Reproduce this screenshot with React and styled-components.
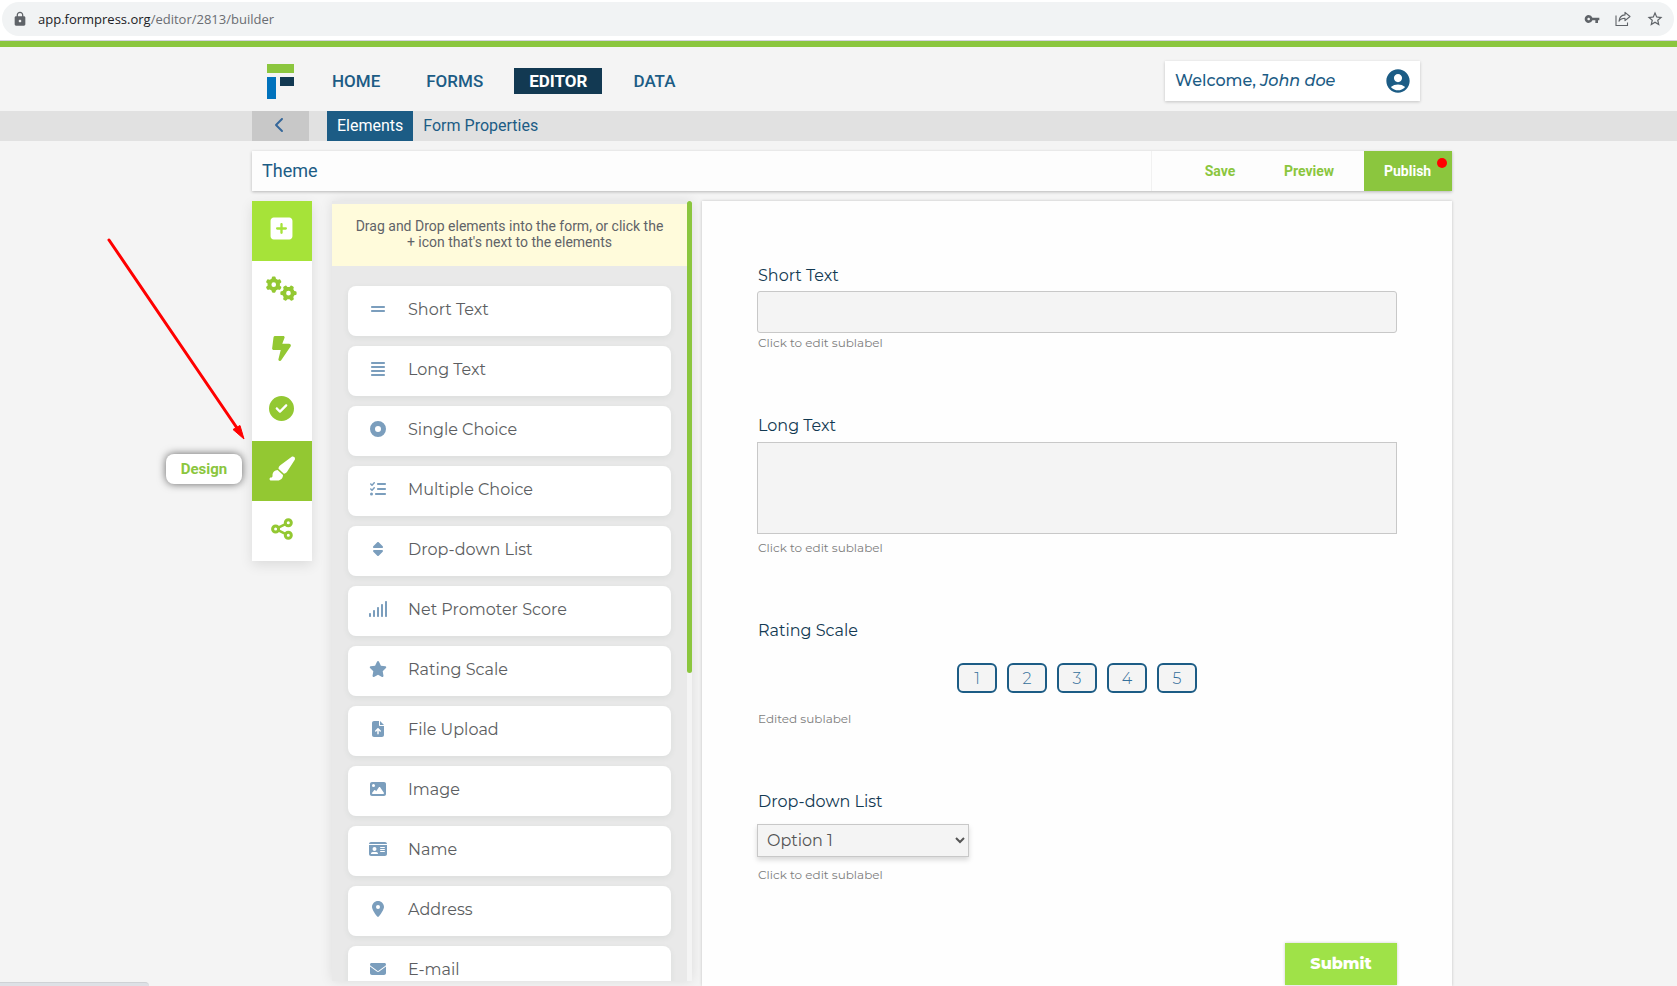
import React from "react";
import styled, { createGlobalStyle, css } from "styled-components";
import {
  FaGripLines, FaAlignJustify, FaCircleDot, FaListCheck, FaSort, FaStar,
  FaFileArrowUp, FaImage, FaIdCard, FaLocationDot, FaEnvelope, FaSquarePlus, FaGears,
  FaBoltLightning, FaCircleCheck, FaPaintbrush, FaChevronLeft,
} from "react-icons/fa6";
import { MdAccountCircle, MdVpnKey, MdStarBorder, MdLock } from "react-icons/md";

const roboto = `Roboto, "Liberation Sans", sans-serif`;
const rounded = `Montserrat, Inter, "Liberation Sans", sans-serif`;
const blue = "#1c5c85";
const navy = "#123952";
const green = "#8bc63e";
const leaf = "#93c832";
const lime = "#a6e339";

const GlobalStyle = createGlobalStyle`
  *, *::before, *::after { box-sizing: border-box; }
  body { margin: 0; background: #f4f4f4; font-family: ${roboto}; overflow-x: hidden; }
  button, input, textarea, select { font: inherit; margin: 0; }
  a { text-decoration: none; color: inherit; }
`;

const Page = styled.div`
  position: relative;
  min-height: 100vh;
  display: flex;
  flex-direction: column;
`;

/* Browser address bar */
const AddressBar = styled.div`
  background: #fff;
  padding: 2px 3px 4px 2px;
  border-bottom: 1px solid #d5d3dd;
`;
const AddressPill = styled.div`
  height: 34px;
  border-radius: 17px;
  background: #f1f3f4;
  display: flex;
  align-items: center;
  gap: 15px;
  padding: 0 10px;
  color: #5f6368;
  font: 13px/20px "Open Sans", sans-serif;
`;
const Url = styled.span`
  flex: 1;
  margin-left: -5px;
  color: #6a6d72;
  b { font-weight: 400; color: #202124; }
`;

const Shell = styled.div`
  padding-left: 27px;
`;
const Container = styled.div`
  width: 100%;
  max-width: 1200px;
  margin: 0 auto;
  display: flex;
`;

/* Main header */
const Header = styled.header`
  border-top: 6px solid ${green};
  height: 70px;
`;
const HeaderRow = styled(Container)`
  height: 64px;
  align-items: center;
  padding: 4px 32px 0 15px;
`;
const Logo = styled.svg`
  display: block;
  margin-right: 23px;
`;
const MainNav = styled.nav`
  display: flex;
  align-items: center;
  gap: 16px;
  flex: 1;
`;
const NavLink = styled.a`
  padding: 0 15px;
  line-height: 26px;
  font-size: 17px;
  font-weight: 500;
  color: ${blue};
  ${(p) => p.$active && css`
    background: ${navy};
    color: #fff;
    font-weight: 700;
  `}
`;
const UserBox = styled.div`
  width: 255px;
  height: 40px;
  padding: 0 8px 0 10px;
  background: #fff;
  box-shadow: 0 1px 3px rgba(0, 0, 0, 0.2);
  display: flex;
  align-items: center;
  justify-content: space-between;
  font: 500 16px/20px ${rounded};
  color: ${blue};
`;

/* Secondary bar */
const SubBar = styled.div`
  background: #e1e1e1;
`;
const SubRow = styled(Container)`
  height: 30px;
`;
const Back = styled.button`
  width: 57px;
  margin-right: 18px;
  padding: 0 2px 2px 0;
  border: 0;
  background: #c8c8c8;
  color: #35679a;
  display: flex;
  align-items: center;
  justify-content: center;
`;
const Tab = styled.a`
  padding: 0 10px;
  font-size: 16px;
  line-height: 29px;
  color: ${blue};
  ${(p) => p.$active && css`
    background: ${blue};
    color: #fff;
  `}
`;

/* Title and actions */
const Toolbar = styled(Container)`
  margin-top: 10px;
  height: 40px;
  background: #fdfdfd;
  box-shadow: 0 1px 3px rgba(0, 0, 0, 0.25);
`;
const Title = styled.h1`
  flex: 1;
  margin: 0;
  padding-left: 10px;
  font-size: 18px;
  font-weight: 400;
  line-height: 39px;
  color: ${blue};
`;
const Actions = styled.div`
  display: flex;
  justify-content: flex-end;
  width: 301px;
  border-left: 1px solid #f1f1f1;
`;
const Action = styled.button`
  position: relative;
  border: 0;
  padding: 0 20px 1px;
  background: none;
  color: ${green};
  font-size: 14px;
  font-weight: 700;
  width: 88px;
  ${(p) => p.$primary && css`
    margin-left: 12px;
    background: ${green};
    color: #fff;
    text-align: left;
  `}
`;
const Dot = styled.span`
  position: absolute;
  top: 7px;
  right: 5px;
  width: 10px;
  height: 10px;
  border-radius: 50%;
  background: #f00;
`;

/* Workspace */
const Workspace = styled(Container)`
  margin-top: 10px;
  align-items: flex-start;
`;
const Rail = styled.div`
  width: 60px;
  margin-right: 20px;
  background: #fff;
  box-shadow: 0 4px 12px rgba(0, 0, 0, 0.1);
`;
const RailButton = styled.button`
  position: relative;
  display: flex;
  align-items: center;
  justify-content: center;
  width: 60px;
  height: 60px;
  padding: 0 1px 5px 0;
  border: 0;
  background: ${(p) => p.$bg || "#fff"};
  color: ${(p) => (p.$bg ? "#fff" : leaf)};
`;
const Tooltip = styled.span`
  position: absolute;
  right: 70px;
  top: 13px;
  width: 76px;
  border-radius: 8px;
  background: #fff;
  box-shadow: 0 0 8px rgba(0, 0, 0, 0.6);
  color: ${green};
  font-size: 15px;
  font-weight: 700;
  line-height: 30px;
  text-align: center;
`;

const ElementsPanel = styled.aside`
  width: 360px;
  height: calc(100vh - 206px);
  min-height: 400px;
  display: flex;
  background: #e9e9e9;
  box-shadow: 0 0 12px rgba(0, 0, 0, 0.1);
`;
const ElementsScroll = styled.div`
  flex: 1;
  padding-top: 3px;
  overflow: hidden;
`;
const Track = styled.div`
  width: 5px;
  background: #f4f4f4;
`;
const Thumb = styled.div`
  height: ${(p) => p.$size}%;
  border-radius: 3px;
  background: ${green};
`;
const Hint = styled.p`
  margin: 0;
  padding: 14px 20px 16px;
  background: #fffbdb;
  color: #5f6368;
  font-size: 14px;
  line-height: 16px;
  text-align: center;
`;
const ElementList = styled.ul`
  list-style: none;
  margin: 0;
  padding: 20px 16px;
  display: flex;
  flex-direction: column;
  gap: 10px;
`;
const ElementCard = styled.li`
  flex: none;
  height: 50px;
  padding-bottom: 4px;
  display: flex;
  align-items: center;
  border-radius: 8px;
  background: #fff;
  box-shadow: 0 2px 6px rgba(40, 70, 60, 0.07);
  font: 16px/20px ${rounded};
  color: #5c5e61;
`;
const CardIcon = styled.span`
  width: 60px;
  display: flex;
  justify-content: center;
  color: #7b9ebd;
`;
const CardName = styled.span`
  padding-top: 2px;
`;

/* Form canvas */
const Canvas = styled.form`
  flex: 1;
  align-self: stretch;
  min-width: 0;
  margin-left: 10px;
  padding: 64px 55px 1px;
  background: #fefefe;
  box-shadow: 0 0 3px rgba(0, 0, 0, 0.2);
  display: flex;
  flex-direction: column;
  font-family: ${rounded};
`;
const Field = styled.div`
  display: flex;
  flex-direction: column;
  align-items: flex-start;
  margin-bottom: ${(p) => p.$after || 64}px;
`;
const Label = styled.label`
  padding-left: 1px;
  font-size: 16px;
  line-height: 22px;
  margin-bottom: ${(p) => p.$gap || 4}px;
  color: ${navy};
`;
const SubLabel = styled.span`
  padding-left: 1px;
  font-size: 12px;
  line-height: 16px;
  margin-top: ${(p) => p.$gap || 2}px;
  color: #7d7d7d;
`;
const control = css`
  border: 1px solid #c8c8c8;
  background: #f4f4f4;
  color: #555;
`;
const TextInput = styled.input`
  ${control}
  width: 100%;
  height: 42px;
  border-radius: 3px;
  padding: 0 10px;
`;
const TextArea = styled.textarea`
  ${control}
  display: block;
  width: 100%;
  height: 92px;
  padding: 10px;
  resize: none;
`;
const Select = styled.select`
  ${control}
  width: 212px;
  height: 33px;
  padding: 0 5px;
  font-size: 16px;
  box-shadow: 0 3px 5px rgba(0, 0, 0, 0.15);
`;
const Ratings = styled.div`
  align-self: center;
  display: flex;
  gap: 10px;
`;
const Rating = styled.button`
  width: 40px;
  height: 30px;
  padding: 0;
  border: 2px solid ${blue};
  border-radius: 6px;
  background: #f4f4f4;
  color: #35709b;
  font-size: 16px;
  font-weight: 300;
`;
const Submit = styled.button`
  align-self: flex-end;
  width: 112px;
  height: 42px;
  padding: 0 0 2px;
  border: 0;
  background: #9fe248;
  color: #fff;
  font-size: 16px;
  font-weight: 800;
  box-shadow: 0 0 3px rgba(0, 0, 0, 0.2);
`;

/* Overlays */
const Arrow = styled.svg`
  position: absolute;
  top: 236px;
  left: calc((100% - 27px - 1200px) / 2 - 120px);
  pointer-events: none;
`;
const StatusBubble = styled.div`
  position: fixed;
  left: 0;
  bottom: 0;
  width: 149px;
  height: 4px;
  background: #dee1e6;
  border-top: 1px solid #cfd2d6;
  border-top-right-radius: 4px;
`;

function ShareNodes() {
  return (
    <svg width="22" height="22" viewBox="0 0 22 22" fill="none" stroke="currentColor" strokeWidth="3" aria-hidden="true">
      <circle cx="4.6" cy="11" r="3" />
      <circle cx="17.3" cy="4.7" r="3" />
      <circle cx="17.3" cy="17.3" r="3" />
      <path d="M7.4 9.600l7-3.500M7.400 12.400l7 3.500" strokeWidth="2.4" />
    </svg>
  );
}

function ShareArrow() {
  return (
    <svg width="16" height="16" viewBox="0 0 16 16" fill="none" stroke="currentColor" strokeWidth="1.1" aria-hidden="true">
      <path d="M1 4.500v10h11.500v-3" />
      <path d="M10 1.300l5 4.200-5 4.200V7.200c-3 0-4.800 1-6 3 .3-3.600 2.400-6 6-6.300z" strokeLinejoin="round" />
    </svg>
  );
}

function SignalBars() {
  return (
    <svg width="18" height="16" viewBox="0 0 18 16" fill="currentColor" aria-hidden="true">
      {[4, 7, 10, 13, 16].map((h, i) => (
        <rect key={h} x={i * 4} y={16 - h} width="2" height={h} rx="0.7" />
      ))}
    </svg>
  );
}

const railItems = [
  { name: "Add element", icon: <FaSquarePlus size={25} />, bg: lime },
  { name: "Settings", icon: <FaGears size={31} /> },
  { name: "Integrations", icon: <FaBoltLightning size={25} /> },
  { name: "After submission", icon: <FaCircleCheck size={25} /> },
  { name: "Design", icon: <FaPaintbrush size={27} />, bg: leaf, tip: true },
  { name: "Share", icon: <ShareNodes /> },
];

const elements = [
  ["Short Text", <FaGripLines size={16} />],
  ["Long Text", <FaAlignJustify size={16} />],
  ["Single Choice", <FaCircleDot size={16} />],
  ["Multiple Choice", <FaListCheck size={16} />],
  ["Drop-down List", <FaSort size={16} />],
  ["Net Promoter Score", <SignalBars />],
  ["Rating Scale", <FaStar size={18} />],
  ["File Upload", <FaFileArrowUp size={16} />],
  ["Image", <FaImage size={16} />],
  ["Name", <FaIdCard size={18} />],
  ["Address", <FaLocationDot size={16} />],
  ["E-mail", <FaEnvelope size={16} />],
];

export default function App() {
  return (
    <Page>
      <GlobalStyle />
      <AddressBar>
        <AddressPill>
          <MdLock size={16} />
          <Url><b>app.formpress.org</b>/editor/2813/builder</Url>
          <MdVpnKey size={16} />
          <ShareArrow />
          <MdStarBorder size={18} />
        </AddressPill>
      </AddressBar>

      <Header>
        <Shell>
          <HeaderRow>
            <Logo width="27" height="35" viewBox="0 0 27 35" role="img" aria-label="FormPress">
              <rect width="27" height="9" fill={green} />
              <rect y="13" width="9" height="22" fill="#0072bc" />
              <rect x="13" y="13" width="14" height="9" fill={navy} />
            </Logo>
            <MainNav>
              <NavLink href="#home">HOME</NavLink>
              <NavLink href="#forms">FORMS</NavLink>
              <NavLink href="#editor" $active>EDITOR</NavLink>
              <NavLink href="#data">DATA</NavLink>
            </MainNav>
            <UserBox>
              <span>Welcome, <em>John doe</em></span>
              <MdAccountCircle size={28} />
            </UserBox>
          </HeaderRow>
        </Shell>
      </Header>

      <SubBar>
        <Shell>
          <SubRow>
            <Back aria-label="Back"><FaChevronLeft size={16} /></Back>
            <Tab href="#elements" $active>Elements</Tab>
            <Tab href="#properties">Form Properties</Tab>
          </SubRow>
        </Shell>
      </SubBar>

      <Shell>
        <Toolbar>
          <Title>Theme</Title>
          <Actions>
            <Action>Save</Action>
            <Action>Preview</Action>
            <Action $primary>Publish<Dot /></Action>
          </Actions>
        </Toolbar>

        <Workspace>
          <Rail>
            {railItems.map((item) => (
              <RailButton key={item.name} $bg={item.bg} aria-label={item.name}>
                {item.icon}
                {item.tip && <Tooltip>{item.name}</Tooltip>}
              </RailButton>
            ))}
          </Rail>

          <ElementsPanel>
            <ElementsScroll>
              <Hint>Drag and Drop elements into the form, or click the + icon that's next to the elements</Hint>
              <ElementList>
                {elements.map(([name, icon]) => (
                  <ElementCard key={name}>
                    <CardIcon>{icon}</CardIcon>
                    <CardName>{name}</CardName>
                  </ElementCard>
                ))}
              </ElementList>
            </ElementsScroll>
            <Track><Thumb $size={60.5} /></Track>
          </ElementsPanel>

          <Canvas onSubmit={(e) => e.preventDefault()}>
            <Field $after={64}>
              <Label htmlFor="short">Short Text</Label>
              <TextInput id="short" type="text" />
              <SubLabel>Click to edit sublabel</SubLabel>
            </Field>
            <Field $after={64}>
              <Label htmlFor="long" $gap={5}>Long Text</Label>
              <TextArea id="long" />
              <SubLabel $gap={6}>Click to edit sublabel</SubLabel>
            </Field>
            <Field $after={64}>
              <Label as="span" id="rating" $gap={21}>Rating Scale</Label>
              <Ratings role="group" aria-labelledby="rating">
                {[1, 2, 3, 4, 5].map((n) => <Rating key={n} type="button">{n}</Rating>)}
              </Ratings>
              <SubLabel $gap={18}>Edited sublabel</SubLabel>
            </Field>
            <Field $after={60}>
              <Label htmlFor="drop" $gap={11}>Drop-down List</Label>
              <Select id="drop"><option>Option 1</option></Select>
              <SubLabel $gap={10}>Click to edit sublabel</SubLabel>
            </Field>
            <Submit type="submit">Submit</Submit>
          </Canvas>
        </Workspace>
      </Shell>

      <Arrow width="142" height="210" viewBox="0 0 142 210" aria-hidden="true">
        <path d="M4 4L132 192" stroke="#f00" strokeWidth="3" strokeLinecap="round" />
        <path d="M139 203L128 193.500L135 189.500Z" fill="#f00" stroke="#f00" />
      </Arrow>
      <StatusBubble />
    </Page>
  );
}
